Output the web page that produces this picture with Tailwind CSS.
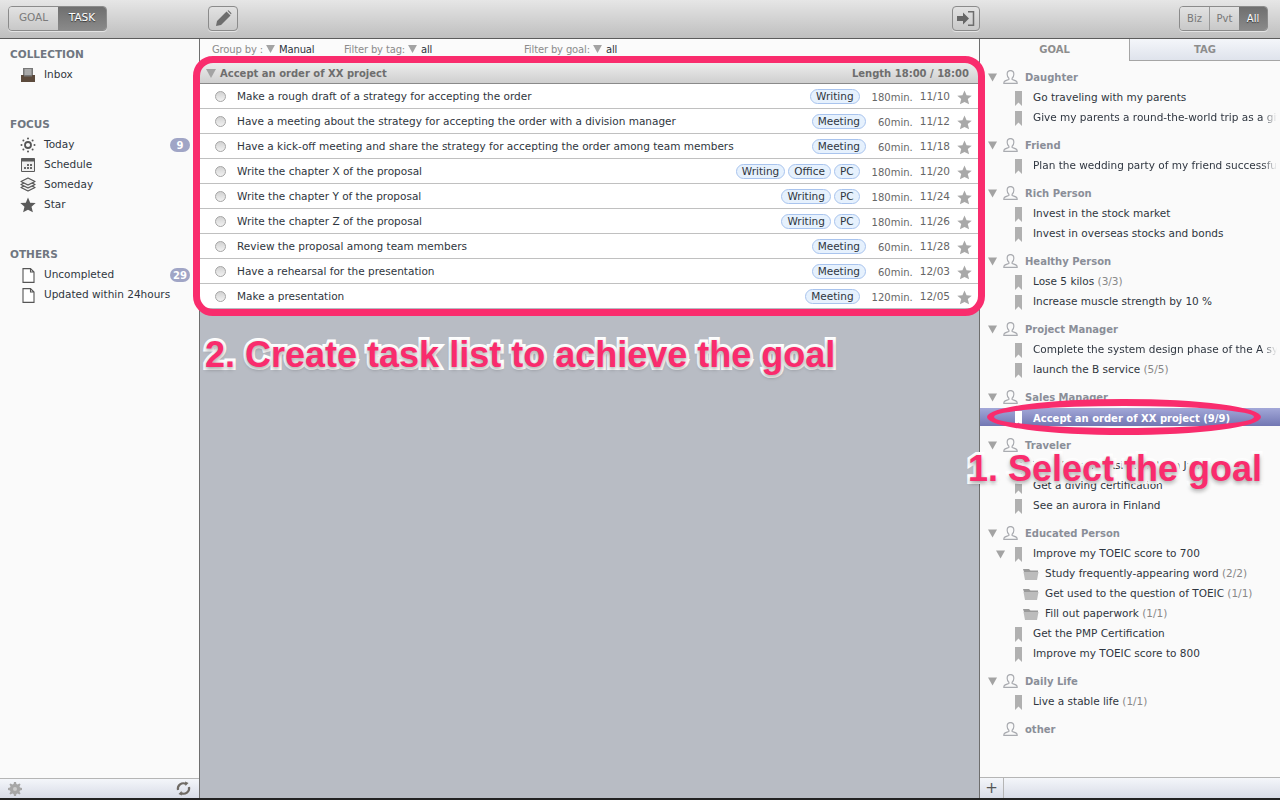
<!DOCTYPE html>
<html lang="en">
<head>
  <meta charset="UTF-8" />
  <title>Goal Task</title>
  <script src="https://cdn.jsdelivr.net/npm/@tailwindcss/browser@4"></script>
</head>
<body class="w-[1280px] h-[800px] overflow-hidden relative bg-[#fafafa] font-['DejaVu_Sans',sans-serif] text-[10.5px] text-[#2f3640]">

  <!-- Icons -->
  <svg class="hidden">
    <symbol id="tri" viewBox="0 0 10 9"><path d="M0 0h10L5 9z" fill="#a3a3a3"/></symbol>
    <symbol id="star" viewBox="0 0 16 16"><path d="M8 0.5l2.2 5.2 5.5.4-4.2 3.6 1.4 5.5L8 12.8l-4.9 2.4 1.4-5.5L.3 6.1l5.5-.4z" fill="#a8a8a8"/></symbol>
    <symbol id="mark" viewBox="0 0 7 15"><path d="M0 0h7v15L3.5 11.5 0 15z" fill="#b0b0b0"/></symbol>
    <symbol id="person" viewBox="0.8 0.5 13.4 13"><path d="M7.5 1C5.6 1 4.4 2.4 4.4 4.4c0 1.6.7 3 1.6 3.7v1.2c-1.5.7-3.6 1-4.3 2-.3.5-.4 1.200-.4 1.700h12.400c0-.5-.1-1.200-.4-1.700-.7-1-2.800-1.300-4.300-2V8.100c.9-.7 1.600-2.100 1.600-3.700C10.600 2.400 9.400 1 7.500 1z" fill="none" stroke="#a9abb0" stroke-width="1.100"/></symbol>
    <symbol id="folder" viewBox="0 0 16 12"><path d="M0 1h6l1.500 1.500H15V4H1z" fill="#9a9a9a"/><path d="M0.500 4H15.500L14 12H2z" fill="#bcbcbc"/></symbol>
    <symbol id="page" viewBox="0 0 13 15"><path d="M1 .6h7.500L12 4v10.400H1zM8.500.6V4H12" fill="#fff" stroke="#555" stroke-width="1.100"/></symbol>
  </svg>

  <!-- Toolbar -->
  <header class="h-[39px] flex items-center pl-2 pr-3 pb-[2px] border-b border-[#5c5c5c] bg-gradient-to-b from-[#e6e6e6] to-[#bfbfbf]">
    <div class="flex h-[25px] w-[99px] rounded border border-[#8b8b8b] text-[10.5px] overflow-hidden shadow-[0_1px_0_#e4e4e4]">
      <div class="w-[49px] flex items-center justify-center text-[#7a7a7a] bg-gradient-to-b from-[#e2e2e2] to-[#c8c8c8]">GOAL</div>
      <div class="flex-1 flex items-center justify-center text-white bg-gradient-to-b from-[#6f6f6f] to-[#8a8a8a] [text-shadow:0_1px_1px_#333]">TASK</div>
    </div>
    <div class="ml-[101px] w-[30px] h-[25px] rounded border border-[#8b8b8b] flex items-center justify-center bg-gradient-to-b from-[#e2e2e2] to-[#c8c8c8] shadow-[0_1px_0_#e4e4e4]">
      <svg width="17" height="17" viewBox="0 0 17 17"><path d="M1 16l1-5L11.500 1.500l4 4L6 15zM12.500.8l1-.5 3 3-.5 1.200z" fill="#6d6d6d"/></svg>
    </div>
    <div class="ml-[714px] w-[28px] h-[25px] rounded border border-[#8b8b8b] flex items-center justify-center bg-gradient-to-b from-[#e2e2e2] to-[#c8c8c8] shadow-[0_1px_0_#e4e4e4]">
      <svg width="18" height="15" viewBox="0 0 18 15"><path d="M0 5h6V1.500L12 7.500l-6 6V10H0z" fill="#666"/><path d="M11 .8h5.500v13.400H11" fill="none" stroke="#6d6d6d" stroke-width="1.500"/></svg>
    </div>
    <div class="ml-auto flex h-[25px] w-[89px] rounded border border-[#8b8b8b] text-[10px] overflow-hidden shadow-[0_1px_0_#e4e4e4]">
      <div class="w-[30px] flex items-center justify-center text-[#777] border-r border-[#999] bg-gradient-to-b from-[#e2e2e2] to-[#c8c8c8]">Biz</div>
      <div class="w-[29px] flex items-center justify-center text-[#777] bg-gradient-to-b from-[#e2e2e2] to-[#c8c8c8]">Pvt</div>
      <div class="flex-1 flex items-center justify-center text-white bg-gradient-to-b from-[#6f6f6f] to-[#8a8a8a] [text-shadow:0_1px_1px_#333]">All</div>
    </div>
  </header>

  <div class="flex h-[759px]">
    <!-- Left sidebar -->
    <aside class="w-[200px] border-r border-[#6e6e6e] flex flex-col">
      <div class="flex-1 pt-[6px]">
        <div class="h-[20px] pl-[10px] flex items-center font-bold text-[10.5px] text-[#6f7680]">COLLECTION</div>
        <div class="h-[20px] flex items-center pl-[20px] gap-[8px]">
          <svg class="w-[16px] h-[16px]" viewBox="0 0 16 16"><path d="M3 1h10v9H3z" fill="#777"/><path d="M4.500 3h7M4.500 5h7M4.500 7h7" stroke="#ddd" stroke-width="1"/><path d="M1 8h3v1.500h8V8h3v7H1z" fill="#5c4a3c"/></svg>
          <span>Inbox</span>
        </div>
        <div class="h-[20px] mt-[30px] pl-[10px] flex items-center font-bold text-[#6f7680]">FOCUS</div>
        <div class="h-[20px] flex items-center pl-[20px] pr-[9px] gap-[8px]">
          <svg class="w-[16px] h-[16px]" viewBox="0 0 16 16"><circle cx="8" cy="8" r="3" fill="none" stroke="#555" stroke-width="1.800"/><g fill="#555"><circle cx="8" cy="1.500" r="1"/><circle cx="8" cy="14.500" r="1"/><circle cx="1.500" cy="8" r="1"/><circle cx="14.500" cy="8" r="1"/><circle cx="3.400" cy="3.400" r="1"/><circle cx="12.600" cy="3.400" r="1"/><circle cx="3.400" cy="12.600" r="1"/><circle cx="12.600" cy="12.600" r="1"/></g></svg>
          <span>Today</span>
          <span class="ml-auto w-[20px] h-[14px] rounded-full bg-[#a0a5c6] text-white font-bold text-[10px] flex items-center justify-center">9</span>
        </div>
        <div class="h-[20px] flex items-center pl-[20px] gap-[8px]">
          <svg class="w-[16px] h-[16px]" viewBox="0 0 16 16"><path d="M1.500 1.500h13v13h-13z" fill="#eee" stroke="#5a5a5a"/><path d="M1.500 1.500h13v3h-13z" fill="#5a5a5a"/><path d="M7 7h2v2H7zM10 7h2v2h-2zM4 10h2v2H4zM7 10h2v2H7zM10 10h2v2h-2z" fill="#666"/></svg>
          <span>Schedule</span>
        </div>
        <div class="h-[20px] flex items-center pl-[20px] gap-[8px]">
          <svg class="w-[16px] h-[16px]" viewBox="0 0 16 16"><g fill="#eee" stroke="#555" stroke-width="1.200" stroke-linejoin="round"><path d="M1 10.500l7-3.500 7 3.500-7 3.500z"/><path d="M1 7.500l7-3.500 7 3.500-7 3.500z"/><path d="M1 4.500l7-3.500 7 3.500-7 3.500z"/></g></svg>
          <span>Someday</span>
        </div>
        <div class="h-[20px] flex items-center pl-[20px] gap-[8px]">
          <svg class="w-[16px] h-[16px]" viewBox="0 0 16 16"><path d="M8 .5l2.200 5.200 5.500.4-4.200 3.600 1.400 5.500L8 12.800l-4.900 2.400 1.400-5.500L.3 6.100l5.500-.4z" fill="#5a5a5a"/></svg>
          <span>Star</span>
        </div>
        <div class="h-[20px] mt-[30px] pl-[10px] flex items-center font-bold text-[#6f7680]">OTHERS</div>
        <div class="h-[20px] flex items-center pl-[22px] pr-[9px] gap-[9px]">
          <svg class="w-[13px] h-[15px]"><use href="#page"/></svg>
          <span>Uncompleted</span>
          <span class="ml-auto w-[20px] h-[14px] rounded-full bg-[#a0a5c6] text-white font-bold text-[10px] flex items-center justify-center">29</span>
        </div>
        <div class="h-[20px] flex items-center pl-[22px] gap-[9px]">
          <svg class="w-[13px] h-[15px]"><use href="#page"/></svg>
          <span>Updated within 24hours</span>
        </div>
      </div>
      <footer class="h-[20px] shrink-0 border-t border-[#b5b5b5] flex items-center justify-between px-[8px] bg-gradient-to-b from-[#f4f6fa] to-[#d8dce7]">
        <svg class="w-[14px] h-[14px]" viewBox="0 0 14 14"><path d="M6 0h2l.4 2 1.300.5L11.400 1.400l1.200 1.200-1.100 1.700.5 1.300 2 .4v2l-2 .4-.5 1.300 1.100 1.700-1.200 1.200-1.700-1.100-1.300.5L8 14H6l-.4-2-1.300-.5-1.700 1.100-1.200-1.200 1.100-1.700L2 8.400 0 8V6l2-.4.5-1.300L1.400 2.600l1.200-1.200 1.700 1.100L5.600 2z" fill="#a6a6a6"/><circle cx="7" cy="7" r="2" fill="#ccc"/></svg>
        <svg class="w-[15px] h-[15px]" viewBox="0 0 15 15"><path d="M2 9a5.500 5.500 0 0 1 8-6" fill="none" stroke="#6f6a64" stroke-width="2.200"/><path d="M13 6a5.500 5.500 0 0 1-8 6" fill="none" stroke="#6f6a64" stroke-width="2.200"/><path d="M9 .5l3.500 1.500L9.500 5z" fill="#6f6a64"/><path d="M6 14.500L2.500 13l3-3z" fill="#6f6a64"/></svg>
      </footer>
    </aside>

    <!-- Main column -->
    <main class="w-[780px] bg-[#b8bcc4]">
      <div class="h-[22px] pb-[2px] bg-[#fbfbfb] flex items-center text-[10px] tracking-[-0.15px] text-[#8b8b8b]">
        <span class="ml-[12px] w-[50px] whitespace-nowrap">Group by :</span>
        <svg class="w-[9px] h-[8px] ml-[4px]"><use href="#tri"/></svg>
        <span class="ml-[4px] text-[#2f3640] w-[65px]">Manual</span>
        <span class="w-[60px] whitespace-nowrap">Filter by tag:</span>
        <svg class="w-[9px] h-[8px] ml-[4px]"><use href="#tri"/></svg>
        <span class="ml-[4px] text-[#2f3640] w-[103px]">all</span>
        <span class="w-[65px] whitespace-nowrap">Filter by goal:</span>
        <svg class="w-[9px] h-[8px] ml-[4px]"><use href="#tri"/></svg>
        <span class="ml-[4px] text-[#2f3640]">all</span>
      </div>
      <div class="h-[23px] flex items-center pl-[6px] pr-[11px] pt-[2px] font-bold text-[10px] text-[#6e6e6e] border-b border-[#8a8a8a] bg-gradient-to-b from-[#f0f0f0] to-[#cfcfcf]">
        <svg class="w-[10px] h-[9px] mr-[4px]"><use href="#tri"/></svg>
        <span>Accept an order of XX project</span>
        <span class="ml-auto">Length 18:00 / 18:00</span>
      </div>

      <div class="bg-white">
        <div class="h-[25px] flex items-center pl-[15px] pr-[8px] pt-[2px] border-b border-[#c0c0c0]">
          <span class="w-[11px] h-[11px] rounded-full border border-[#a5a5a5] bg-gradient-to-b from-[#d2d2d2] to-[#f2f2f2] mr-[11px] -mt-[2px]"></span>
          <span class="flex-1">Make a rough draft of a strategy for accepting the order</span>
          <span class="h-[15px] -mt-[1px] px-[5px] flex items-center rounded-full border border-[#a9c4ee] bg-[#e6f1fd]">Writing</span>
          <span class="ml-[12px] text-[10px] text-[#666]">180min.</span>
          <span class="ml-[7px] text-[#666]">11/10</span>
          <svg class="w-[15px] h-[15px] ml-[7px] mt-[1px]"><use href="#star"/></svg>
        </div>
        <div class="h-[25px] flex items-center pl-[15px] pr-[8px] pt-[2px] border-b border-[#c0c0c0]">
          <span class="w-[11px] h-[11px] rounded-full border border-[#a5a5a5] bg-gradient-to-b from-[#d2d2d2] to-[#f2f2f2] mr-[11px] -mt-[2px]"></span>
          <span class="flex-1">Have a meeting about the strategy for accepting the order with a division manager</span>
          <span class="h-[15px] -mt-[1px] px-[5px] flex items-center rounded-full border border-[#a9c4ee] bg-[#e6f1fd]">Meeting</span>
          <span class="ml-[12px] text-[10px] text-[#666]">60min.</span>
          <span class="ml-[7px] text-[#666]">11/12</span>
          <svg class="w-[15px] h-[15px] ml-[7px] mt-[1px]"><use href="#star"/></svg>
        </div>
        <div class="h-[25px] flex items-center pl-[15px] pr-[8px] pt-[2px] border-b border-[#c0c0c0]">
          <span class="w-[11px] h-[11px] rounded-full border border-[#a5a5a5] bg-gradient-to-b from-[#d2d2d2] to-[#f2f2f2] mr-[11px] -mt-[2px]"></span>
          <span class="flex-1">Have a kick-off meeting and share the strategy for accepting the order among team members</span>
          <span class="h-[15px] -mt-[1px] px-[5px] flex items-center rounded-full border border-[#a9c4ee] bg-[#e6f1fd]">Meeting</span>
          <span class="ml-[12px] text-[10px] text-[#666]">60min.</span>
          <span class="ml-[7px] text-[#666]">11/18</span>
          <svg class="w-[15px] h-[15px] ml-[7px] mt-[1px]"><use href="#star"/></svg>
        </div>
        <div class="h-[25px] flex items-center pl-[15px] pr-[8px] pt-[2px] border-b border-[#c0c0c0]">
          <span class="w-[11px] h-[11px] rounded-full border border-[#a5a5a5] bg-gradient-to-b from-[#d2d2d2] to-[#f2f2f2] mr-[11px] -mt-[2px]"></span>
          <span class="flex-1">Write the chapter X of the proposal</span>
          <span class="h-[15px] -mt-[1px] px-[5px] flex items-center rounded-full border border-[#a9c4ee] bg-[#e6f1fd]">Writing</span>
          <span class="ml-[3px] h-[15px] -mt-[1px] px-[5px] flex items-center rounded-full border border-[#a9c4ee] bg-[#e6f1fd]">Office</span>
          <span class="ml-[3px] h-[15px] -mt-[1px] px-[5px] flex items-center rounded-full border border-[#a9c4ee] bg-[#e6f1fd]">PC</span>
          <span class="ml-[12px] text-[10px] text-[#666]">180min.</span>
          <span class="ml-[7px] text-[#666]">11/20</span>
          <svg class="w-[15px] h-[15px] ml-[7px] mt-[1px]"><use href="#star"/></svg>
        </div>
        <div class="h-[25px] flex items-center pl-[15px] pr-[8px] pt-[2px] border-b border-[#c0c0c0]">
          <span class="w-[11px] h-[11px] rounded-full border border-[#a5a5a5] bg-gradient-to-b from-[#d2d2d2] to-[#f2f2f2] mr-[11px] -mt-[2px]"></span>
          <span class="flex-1">Write the chapter Y of the proposal</span>
          <span class="h-[15px] -mt-[1px] px-[5px] flex items-center rounded-full border border-[#a9c4ee] bg-[#e6f1fd]">Writing</span>
          <span class="ml-[3px] h-[15px] -mt-[1px] px-[5px] flex items-center rounded-full border border-[#a9c4ee] bg-[#e6f1fd]">PC</span>
          <span class="ml-[12px] text-[10px] text-[#666]">180min.</span>
          <span class="ml-[7px] text-[#666]">11/24</span>
          <svg class="w-[15px] h-[15px] ml-[7px] mt-[1px]"><use href="#star"/></svg>
        </div>
        <div class="h-[25px] flex items-center pl-[15px] pr-[8px] pt-[2px] border-b border-[#c0c0c0]">
          <span class="w-[11px] h-[11px] rounded-full border border-[#a5a5a5] bg-gradient-to-b from-[#d2d2d2] to-[#f2f2f2] mr-[11px] -mt-[2px]"></span>
          <span class="flex-1">Write the chapter Z of the proposal</span>
          <span class="h-[15px] -mt-[1px] px-[5px] flex items-center rounded-full border border-[#a9c4ee] bg-[#e6f1fd]">Writing</span>
          <span class="ml-[3px] h-[15px] -mt-[1px] px-[5px] flex items-center rounded-full border border-[#a9c4ee] bg-[#e6f1fd]">PC</span>
          <span class="ml-[12px] text-[10px] text-[#666]">180min.</span>
          <span class="ml-[7px] text-[#666]">11/26</span>
          <svg class="w-[15px] h-[15px] ml-[7px] mt-[1px]"><use href="#star"/></svg>
        </div>
        <div class="h-[25px] flex items-center pl-[15px] pr-[8px] pt-[2px] border-b border-[#c0c0c0]">
          <span class="w-[11px] h-[11px] rounded-full border border-[#a5a5a5] bg-gradient-to-b from-[#d2d2d2] to-[#f2f2f2] mr-[11px] -mt-[2px]"></span>
          <span class="flex-1">Review the proposal among team members</span>
          <span class="h-[15px] -mt-[1px] px-[5px] flex items-center rounded-full border border-[#a9c4ee] bg-[#e6f1fd]">Meeting</span>
          <span class="ml-[12px] text-[10px] text-[#666]">60min.</span>
          <span class="ml-[7px] text-[#666]">11/28</span>
          <svg class="w-[15px] h-[15px] ml-[7px] mt-[1px]"><use href="#star"/></svg>
        </div>
        <div class="h-[25px] flex items-center pl-[15px] pr-[8px] pt-[2px] border-b border-[#c0c0c0]">
          <span class="w-[11px] h-[11px] rounded-full border border-[#a5a5a5] bg-gradient-to-b from-[#d2d2d2] to-[#f2f2f2] mr-[11px] -mt-[2px]"></span>
          <span class="flex-1">Have a rehearsal for the presentation</span>
          <span class="h-[15px] -mt-[1px] px-[5px] flex items-center rounded-full border border-[#a9c4ee] bg-[#e6f1fd]">Meeting</span>
          <span class="ml-[12px] text-[10px] text-[#666]">60min.</span>
          <span class="ml-[7px] text-[#666]">12/03</span>
          <svg class="w-[15px] h-[15px] ml-[7px] mt-[1px]"><use href="#star"/></svg>
        </div>
        <div class="h-[24px] flex items-center pl-[15px] pr-[8px] pt-[2px]">
          <span class="w-[11px] h-[11px] rounded-full border border-[#a5a5a5] bg-gradient-to-b from-[#d2d2d2] to-[#f2f2f2] mr-[11px] -mt-[2px]"></span>
          <span class="flex-1">Make a presentation</span>
          <span class="h-[15px] -mt-[1px] px-[5px] flex items-center rounded-full border border-[#a9c4ee] bg-[#e6f1fd]">Meeting</span>
          <span class="ml-[12px] text-[10px] text-[#666]">120min.</span>
          <span class="ml-[7px] text-[#666]">12/05</span>
          <svg class="w-[15px] h-[15px] ml-[7px] mt-[1px]"><use href="#star"/></svg>
        </div>
      </div>
    </main>

    <!-- Right panel -->
    <aside class="flex-1 min-w-0 border-l border-[#6e6e6e] -ml-px bg-[#fafafa] flex flex-col">
      <div class="h-[22px] shrink-0 flex font-bold text-[10px] text-[#8d8d8d]">
        <div class="w-[149px] pb-[2px] flex items-center justify-center">GOAL</div>
        <div class="flex-1 flex items-center justify-center border-l border-b border-[#a5a5a5] bg-gradient-to-b from-[#f4f6fa] to-[#dfe3ec]">TAG</div>
      </div>
      <div class="flex-1 pt-[7px]">
        <div class="h-[20px] pb-[2px] flex items-center pl-[8px] font-bold text-[10px] text-[#8a8e98]"><svg class="w-[9px] h-[9px]"><use href="#tri"/></svg><svg class="w-[15px] h-[14px] ml-[6px]"><use href="#person"/></svg><span class="ml-[7px]">Daughter</span></div>
        <div class="h-[20px] flex items-center pl-[35px]"><svg class="w-[7px] h-[15px] mr-[11px]"><use href="#mark"/></svg><span>Go traveling with my parents</span></div>
        <div class="h-[20px] flex items-center pl-[35px]"><svg class="w-[7px] h-[15px] mr-[11px] shrink-0"><use href="#mark"/></svg><span class="w-[244px] overflow-hidden whitespace-nowrap [mask-image:linear-gradient(to_right,black_94%,transparent)]">Give my parents a round-the-world trip as a gift</span></div>

        <div class="h-[20px] pb-[2px] mt-[8px] flex items-center pl-[8px] font-bold text-[10px] text-[#8a8e98]"><svg class="w-[9px] h-[9px]"><use href="#tri"/></svg><svg class="w-[15px] h-[14px] ml-[6px]"><use href="#person"/></svg><span class="ml-[7px]">Friend</span></div>
        <div class="h-[20px] flex items-center pl-[35px]"><svg class="w-[7px] h-[15px] mr-[11px] shrink-0"><use href="#mark"/></svg><span class="w-[244px] overflow-hidden whitespace-nowrap [mask-image:linear-gradient(to_right,black_94%,transparent)]">Plan the wedding party of my friend successfully</span></div>

        <div class="h-[20px] pb-[2px] mt-[8px] flex items-center pl-[8px] font-bold text-[10px] text-[#8a8e98]"><svg class="w-[9px] h-[9px]"><use href="#tri"/></svg><svg class="w-[15px] h-[14px] ml-[6px]"><use href="#person"/></svg><span class="ml-[7px]">Rich Person</span></div>
        <div class="h-[20px] flex items-center pl-[35px]"><svg class="w-[7px] h-[15px] mr-[11px]"><use href="#mark"/></svg><span>Invest in the stock market</span></div>
        <div class="h-[20px] flex items-center pl-[35px]"><svg class="w-[7px] h-[15px] mr-[11px]"><use href="#mark"/></svg><span>Invest in overseas stocks and bonds</span></div>

        <div class="h-[20px] pb-[2px] mt-[8px] flex items-center pl-[8px] font-bold text-[10px] text-[#8a8e98]"><svg class="w-[9px] h-[9px]"><use href="#tri"/></svg><svg class="w-[15px] h-[14px] ml-[6px]"><use href="#person"/></svg><span class="ml-[7px]">Healthy Person</span></div>
        <div class="h-[20px] flex items-center pl-[35px]"><svg class="w-[7px] h-[15px] mr-[11px]"><use href="#mark"/></svg><span>Lose 5 kilos <span class="text-[#888]">(3/3)</span></span></div>
        <div class="h-[20px] flex items-center pl-[35px]"><svg class="w-[7px] h-[15px] mr-[11px]"><use href="#mark"/></svg><span>Increase muscle strength by 10 %</span></div>

        <div class="h-[20px] pb-[2px] mt-[8px] flex items-center pl-[8px] font-bold text-[10px] text-[#8a8e98]"><svg class="w-[9px] h-[9px]"><use href="#tri"/></svg><svg class="w-[15px] h-[14px] ml-[6px]"><use href="#person"/></svg><span class="ml-[7px]">Project Manager</span></div>
        <div class="h-[20px] flex items-center pl-[35px]"><svg class="w-[7px] h-[15px] mr-[11px] shrink-0"><use href="#mark"/></svg><span class="w-[244px] overflow-hidden whitespace-nowrap [mask-image:linear-gradient(to_right,black_94%,transparent)]">Complete the system design phase of the A system</span></div>
        <div class="h-[20px] flex items-center pl-[35px]"><svg class="w-[7px] h-[15px] mr-[11px]"><use href="#mark"/></svg><span>launch the B service <span class="text-[#888]">(5/5)</span></span></div>

        <div class="h-[20px] pb-[2px] mt-[8px] flex items-center pl-[8px] font-bold text-[10px] text-[#8a8e98]"><svg class="w-[9px] h-[9px]"><use href="#tri"/></svg><svg class="w-[15px] h-[14px] ml-[6px]"><use href="#person"/></svg><span class="ml-[7px]">Sales Manager</span></div>
        <div class="h-[18px] pt-[2px] flex items-center pl-[35px] font-bold text-[10px] text-white bg-gradient-to-b from-[#a3a8d8] to-[#7277b3]"><svg class="w-[7px] h-[15px] mr-[11px]" viewBox="0 0 7 15"><path d="M0 0h7v15L3.500 11.500 0 15z" fill="#fff"/></svg><span>Accept an order of XX project (9/9)</span></div>

        <div class="h-[20px] pb-[2px] mt-[10px] flex items-center pl-[8px] font-bold text-[10px] text-[#8a8e98]"><svg class="w-[9px] h-[9px]"><use href="#tri"/></svg><svg class="w-[15px] h-[14px] ml-[6px]"><use href="#person"/></svg><span class="ml-[7px]">Traveler</span></div>
        <div class="h-[20px] flex items-center pl-[35px]"><svg class="w-[7px] h-[15px] mr-[11px]"><use href="#mark"/></svg><span>Travel around Asia and then Japan</span></div>
        <div class="h-[20px] flex items-center pl-[35px]"><svg class="w-[7px] h-[15px] mr-[11px]"><use href="#mark"/></svg><span>Get a diving certification</span></div>
        <div class="h-[20px] flex items-center pl-[35px]"><svg class="w-[7px] h-[15px] mr-[11px]"><use href="#mark"/></svg><span>See an aurora in Finland</span></div>

        <div class="h-[20px] pb-[2px] mt-[8px] flex items-center pl-[8px] font-bold text-[10px] text-[#8a8e98]"><svg class="w-[9px] h-[9px]"><use href="#tri"/></svg><svg class="w-[15px] h-[14px] ml-[6px]"><use href="#person"/></svg><span class="ml-[7px]">Educated Person</span></div>
        <div class="h-[20px] flex items-center pl-[16px]"><svg class="w-[9px] h-[9px] mr-[10px]"><use href="#tri"/></svg><svg class="w-[7px] h-[15px] mr-[11px]"><use href="#mark"/></svg><span>Improve my TOEIC score to 700</span></div>
        <div class="h-[20px] flex items-center pl-[43px]"><svg class="w-[16px] h-[12px] mr-[6px]"><use href="#folder"/></svg><span>Study frequently-appearing word <span class="text-[#888]">(2/2)</span></span></div>
        <div class="h-[20px] flex items-center pl-[43px]"><svg class="w-[16px] h-[12px] mr-[6px]"><use href="#folder"/></svg><span>Get used to the question of TOEIC <span class="text-[#888]">(1/1)</span></span></div>
        <div class="h-[20px] flex items-center pl-[43px]"><svg class="w-[16px] h-[12px] mr-[6px]"><use href="#folder"/></svg><span>Fill out paperwork <span class="text-[#888]">(1/1)</span></span></div>
        <div class="h-[20px] flex items-center pl-[35px]"><svg class="w-[7px] h-[15px] mr-[11px]"><use href="#mark"/></svg><span>Get the PMP Certification</span></div>
        <div class="h-[20px] flex items-center pl-[35px]"><svg class="w-[7px] h-[15px] mr-[11px]"><use href="#mark"/></svg><span>Improve my TOEIC score to 800</span></div>

        <div class="h-[20px] pb-[2px] mt-[8px] flex items-center pl-[8px] font-bold text-[10px] text-[#8a8e98]"><svg class="w-[9px] h-[9px]"><use href="#tri"/></svg><svg class="w-[15px] h-[14px] ml-[6px]"><use href="#person"/></svg><span class="ml-[7px]">Daily Life</span></div>
        <div class="h-[20px] flex items-center pl-[35px]"><svg class="w-[7px] h-[15px] mr-[11px]"><use href="#mark"/></svg><span>Live a stable life <span class="text-[#888]">(1/1)</span></span></div>

        <div class="h-[20px] pb-[2px] mt-[8px] flex items-center pl-[23px] font-bold text-[10px] text-[#8a8e98]"><svg class="w-[15px] h-[14px]"><use href="#person"/></svg><span class="ml-[7px]">other</span></div>
      </div>
      <footer class="h-[21px] shrink-0 border-t border-[#b5b5b5] flex bg-gradient-to-b from-[#f4f6fa] to-[#d8dce7]">
        <div class="w-[24px] border-r border-[#b5b5b5] flex items-center justify-center text-[15px] leading-none text-[#555]">+</div>
      </footer>
    </aside>
  </div>
  <div class="absolute left-0 right-0 bottom-0 h-[2px] bg-[#222]"></div>

  <!-- Annotations -->
  <div class="absolute left-[193px] top-[56px] w-[792px] h-[260px] rounded-[20px] border-[7px] border-[#f92c6d]"></div>
  <div class="absolute left-[987px] top-[399px] w-[274px] h-[36px] rounded-[50%] border-[7px] border-[#f92c6d]"></div>
  <div class="absolute left-[205px] top-[333px] whitespace-nowrap font-['Liberation_Sans',sans-serif] font-bold text-[36px] leading-[44px] text-[#f92c6d] [-webkit-text-stroke:6px_#fff] [paint-order:stroke_fill] [text-shadow:0_2px_4px_#0006]">2. Create task list to achieve the goal</div>
  <div class="absolute left-[968px] top-[447px] whitespace-nowrap font-['Liberation_Sans',sans-serif] font-bold text-[36px] leading-[44px] text-[#f92c6d] [-webkit-text-stroke:6px_#fff] [paint-order:stroke_fill] [text-shadow:0_2px_4px_#0006]">1. Select the goal</div>
</body>
</html>
